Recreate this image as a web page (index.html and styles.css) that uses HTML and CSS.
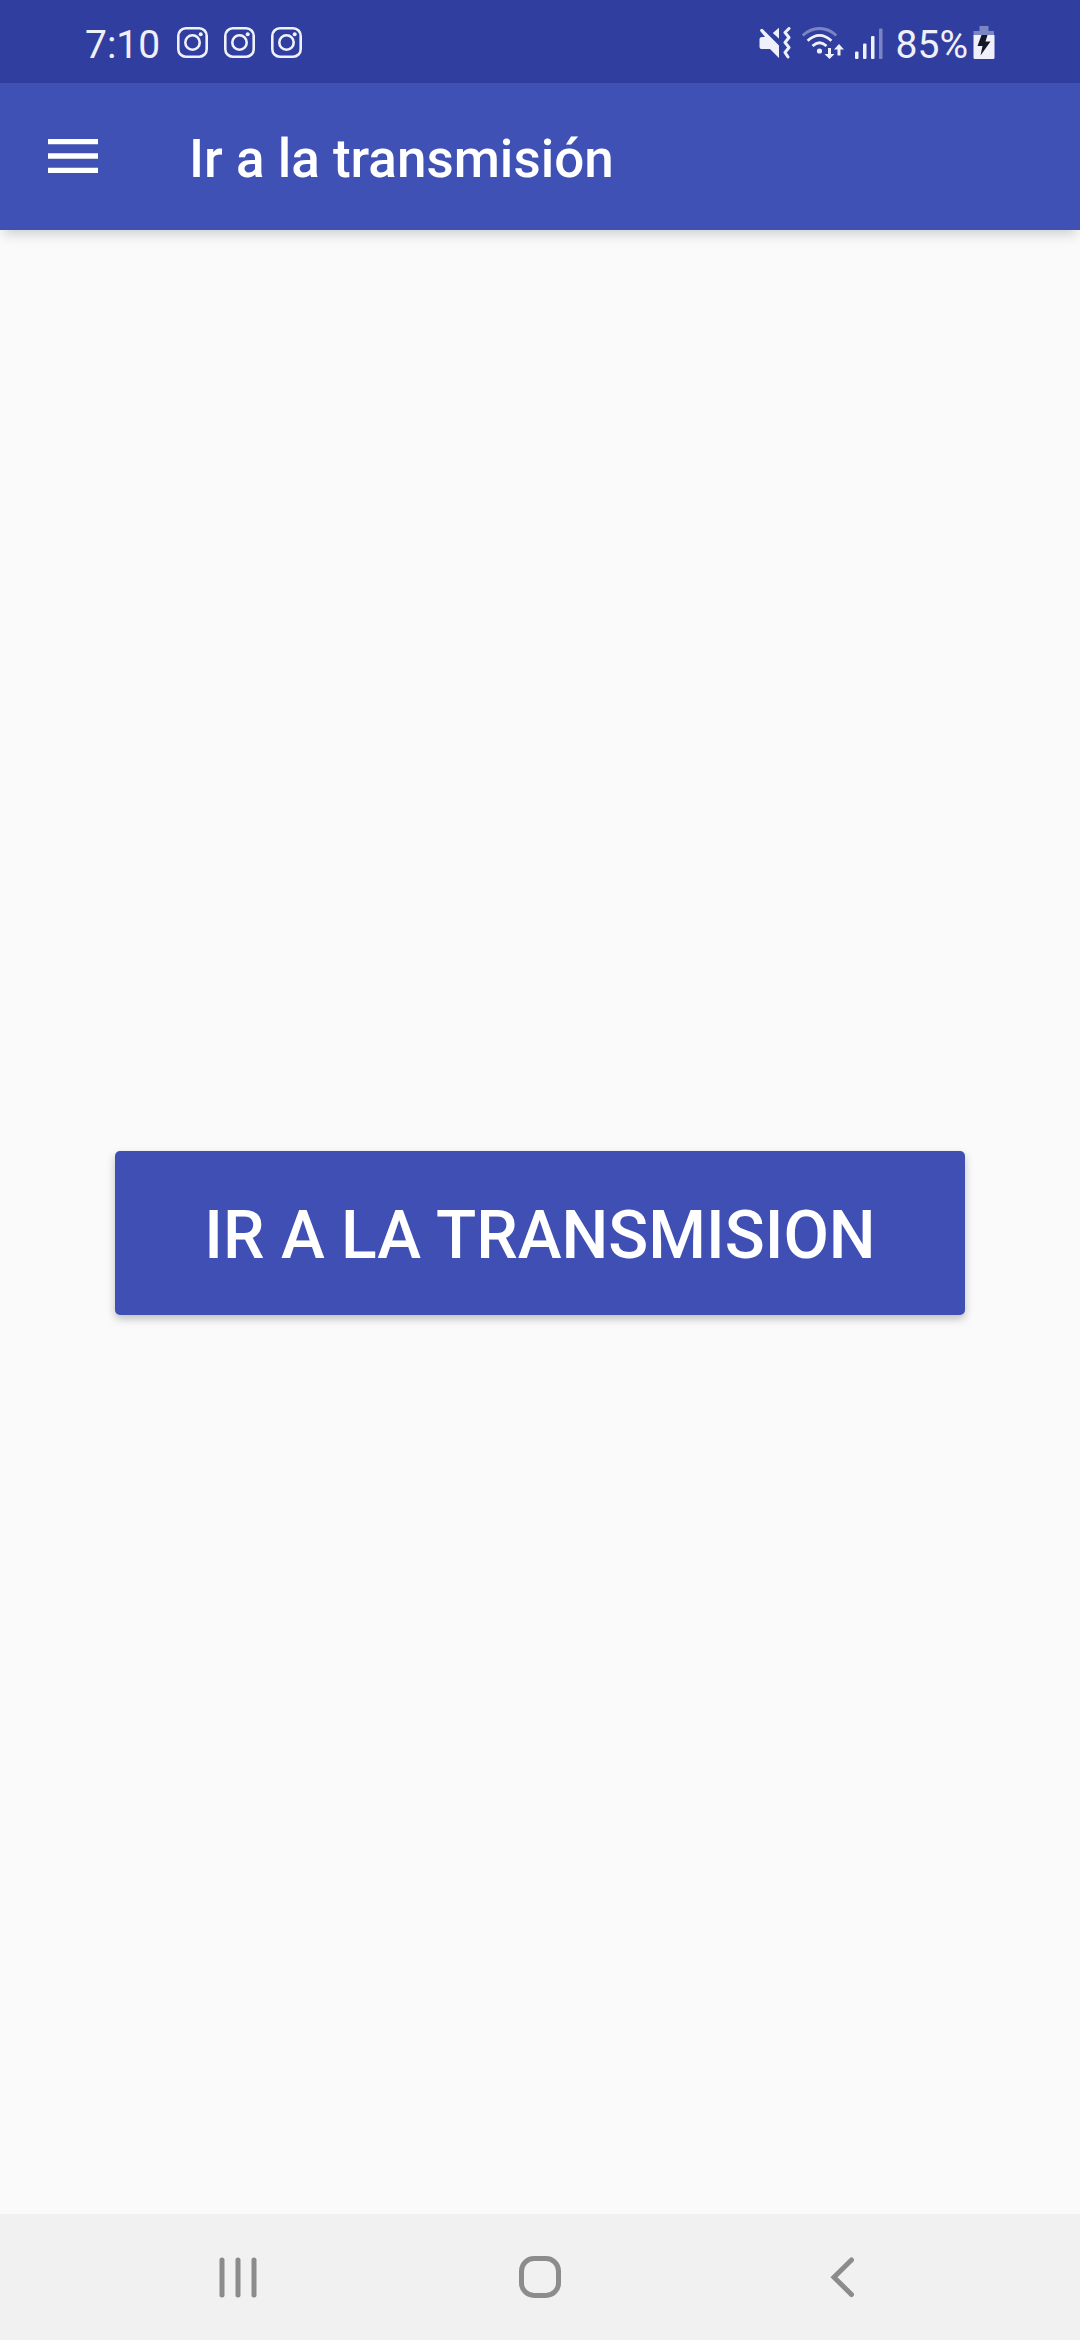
FILE: index.html
```html
<!DOCTYPE html>
<html lang="es">
<head>
  <meta charset="utf-8">
  <meta name="viewport" content="width=device-width, initial-scale=1">
  <title>Ir a la transmisión</title>
  <link rel="stylesheet" href="styles.css">
</head>
<body>
  <svg width="0" height="0" class="symbols" aria-hidden="true">
    <symbol id="instagram" viewBox="0 0 31 31">
      <rect x="1.3" y="1.3" width="28.4" height="28.4" rx="7.5" fill="none" stroke="currentColor" stroke-width="2.6"/>
      <circle cx="15.5" cy="15.5" r="7.2" fill="none" stroke="currentColor" stroke-width="2.6"/>
      <circle cx="23.7" cy="7.2" r="2" fill="currentColor"/>
    </symbol>
  </svg>

  <header class="status-bar">
    <div class="status-group">
      <span class="status-text">7:10</span>
      <div class="notifications">
        <svg width="31" height="31" role="img" aria-label="Instagram"><use href="#instagram"/></svg>
        <svg width="31" height="31" role="img" aria-label="Instagram"><use href="#instagram"/></svg>
        <svg width="31" height="31" role="img" aria-label="Instagram"><use href="#instagram"/></svg>
      </div>
    </div>
    <div class="status-group">
      <div class="indicators">
        <svg width="32" height="32" viewBox="0 0 32 32" aria-hidden="true">
          <path d="M3 10h3L1.6 4.6a1.6 1.6 0 0 1 2.5-2.2L20 18.5V31L11 22H2.5Q.5 22 .5 20v-7.5Q.5 10 3 10Z" fill="currentColor"/>
          <path d="M20 .8v11L13.8 6Z" fill="currentColor"/>
          <path d="M30 1.5 26 5.500 30 10.500 26 15.500 30 20.500 26 25.500 29 30" fill="none" stroke="currentColor" stroke-width="3" stroke-linecap="round" stroke-linejoin="round"/>
        </svg>
        <svg width="42" height="32" viewBox="0 0 42 32" aria-hidden="true">
          <g fill="none" stroke="currentColor" stroke-width="2.8">
            <path d="M.8 8.500Q8 1.500 17.500 1.500T34.200 8.500" opacity=".4"/>
            <path d="M5.600 13.800Q17.500 3 29.400 13.800"/>
            <path d="M10.500 19Q17.500 12.500 24.500 19"/>
          </g>
          <circle cx="17.500" cy="24" r="2.600" fill="currentColor"/>
          <path d="M26 21h3v6h3.500l-5 5-5-5H26ZM35.500 28.500h3v-6H42L37 17l-5 5.500h3.500Z" fill="currentColor"/>
        </svg>
        <svg width="28" height="32" viewBox="0 0 28 32" aria-hidden="true">
          <g fill="currentColor">
            <rect x="0" y="24.500" width="3.500" height="7.500" rx="1"/>
            <rect x="8" y="16.500" width="3.500" height="15.500" rx="1"/>
            <rect x="16" y="9" width="3.500" height="23" rx="1"/>
            <rect x="24" y="1.500" width="3.500" height="30.500" rx="1" opacity=".4"/>
          </g>
        </svg>
      </div>
      <span class="status-text battery-level">85%</span>
      <svg width="22" height="33" viewBox="0 0 22 33" aria-hidden="true">
        <path d="M6.500 0h9v5H21V9H.5V5h6Z" fill="currentColor" opacity=".4"/>
        <path d="M.5 9H21.500V31.500Q21.500 33 20 33H2Q.5 33 .5 31.500Z" fill="currentColor"/>
        <path d="M8.500 9h6l-2 6.500h5L7.500 29.500l2-9.500H4.500Z" fill="#14162a"/>
      </svg>
    </div>
  </header>

  <div class="app-bar">
    <button class="menu-button" type="button" aria-label="Abrir menú">
      <svg width="50" height="34" viewBox="0 0 50 34" aria-hidden="true">
        <path d="M0 2.700h50M0 17h50M0 31.300h50" stroke="currentColor" stroke-width="5.300"/>
      </svg>
    </button>
    <h1 class="app-title">Ir a la transmisión</h1>
  </div>

  <main class="content">
    <button class="go-button" type="button">IR A LA TRANSMISION</button>
  </main>

  <nav class="nav-bar">
    <button class="nav-button" type="button" aria-label="Recientes">
      <svg width="42" height="42" viewBox="0 0 42 42" aria-hidden="true">
        <path d="M5 4v35M21 4v35M37 4v35" stroke="currentColor" stroke-width="5" stroke-linecap="round"/>
      </svg>
    </button>
    <button class="nav-button" type="button" aria-label="Inicio">
      <svg width="42" height="42" viewBox="0 0 42 42" aria-hidden="true">
        <rect x="2.500" y="2.500" width="37" height="37" rx="12.500" fill="none" stroke="currentColor" stroke-width="5"/>
      </svg>
    </button>
    <button class="nav-button" type="button" aria-label="Atrás">
      <svg width="42" height="42" viewBox="0 0 42 42" aria-hidden="true">
        <path d="M30.500 4 13 21.300 30.500 38.500" fill="none" stroke="currentColor" stroke-width="5" stroke-linecap="round"/>
      </svg>
    </button>
  </nav>
</body>
</html>
```
FILE: styles.css
```css
* {
  box-sizing: border-box;
}

body {
  margin: 0;
  min-height: 100vh;
  display: flex;
  flex-direction: column;
  background: #fafafa;
  font-family: Roboto, "Noto Sans", sans-serif;
}

svg {
  display: block;
  flex: none;
}

button {
  border: 0;
  padding: 0;
  background: none;
  color: inherit;
  font: inherit;
  cursor: pointer;
}

.symbols {
  position: absolute;
}

.status-bar {
  display: flex;
  justify-content: space-between;
  padding: 2px 85px 0;
  height: 83px;
  background: #303f9f;
  color: #f0f0fa;
}

.status-group,
.notifications,
.indicators {
  display: flex;
  align-items: center;
}

.status-text {
  padding-top: 4px;
  font-size: 39px;
  line-height: 48px;
}

.notifications {
  gap: 16px;
  margin-left: 17px;
}

.indicators {
  gap: 11px;
}

.battery-level {
  margin: 0 5px 0 13px;
}

.app-bar {
  display: flex;
  align-items: center;
  height: 147px;
  background: #3f51b5;
  color: #fff;
  box-shadow: 0 8px 12px -4px rgba(0, 0, 0, 0.18);
}

.menu-button {
  display: grid;
  place-items: center;
  padding: 0 2px 2px 0;
  width: 147px;
  height: 147px;
}

.app-title {
  margin: 0;
  padding: 4px 0 0 42px;
  font-size: 53px;
  font-weight: 500;
  line-height: 62px;
}

.content {
  flex: 1;
  display: flex;
  align-items: center;
  padding: 22px 115px 0;
}

.go-button {
  flex: 1;
  padding: 46px 16px 40px;
  border-radius: 5px;
  background: #3f4fb4;
  color: #fff;
  font-size: 66px;
  font-weight: 500;
  line-height: 78px;
  box-shadow: 0 4px 8px rgba(0, 0, 0, 0.24);
}

.nav-bar {
  display: flex;
  padding: 0 87px;
  height: 126px;
  background: #f1f1f1;
  color: #8c8c8c;
}

.nav-button {
  flex: 1;
  display: grid;
  place-items: center;
}
```
